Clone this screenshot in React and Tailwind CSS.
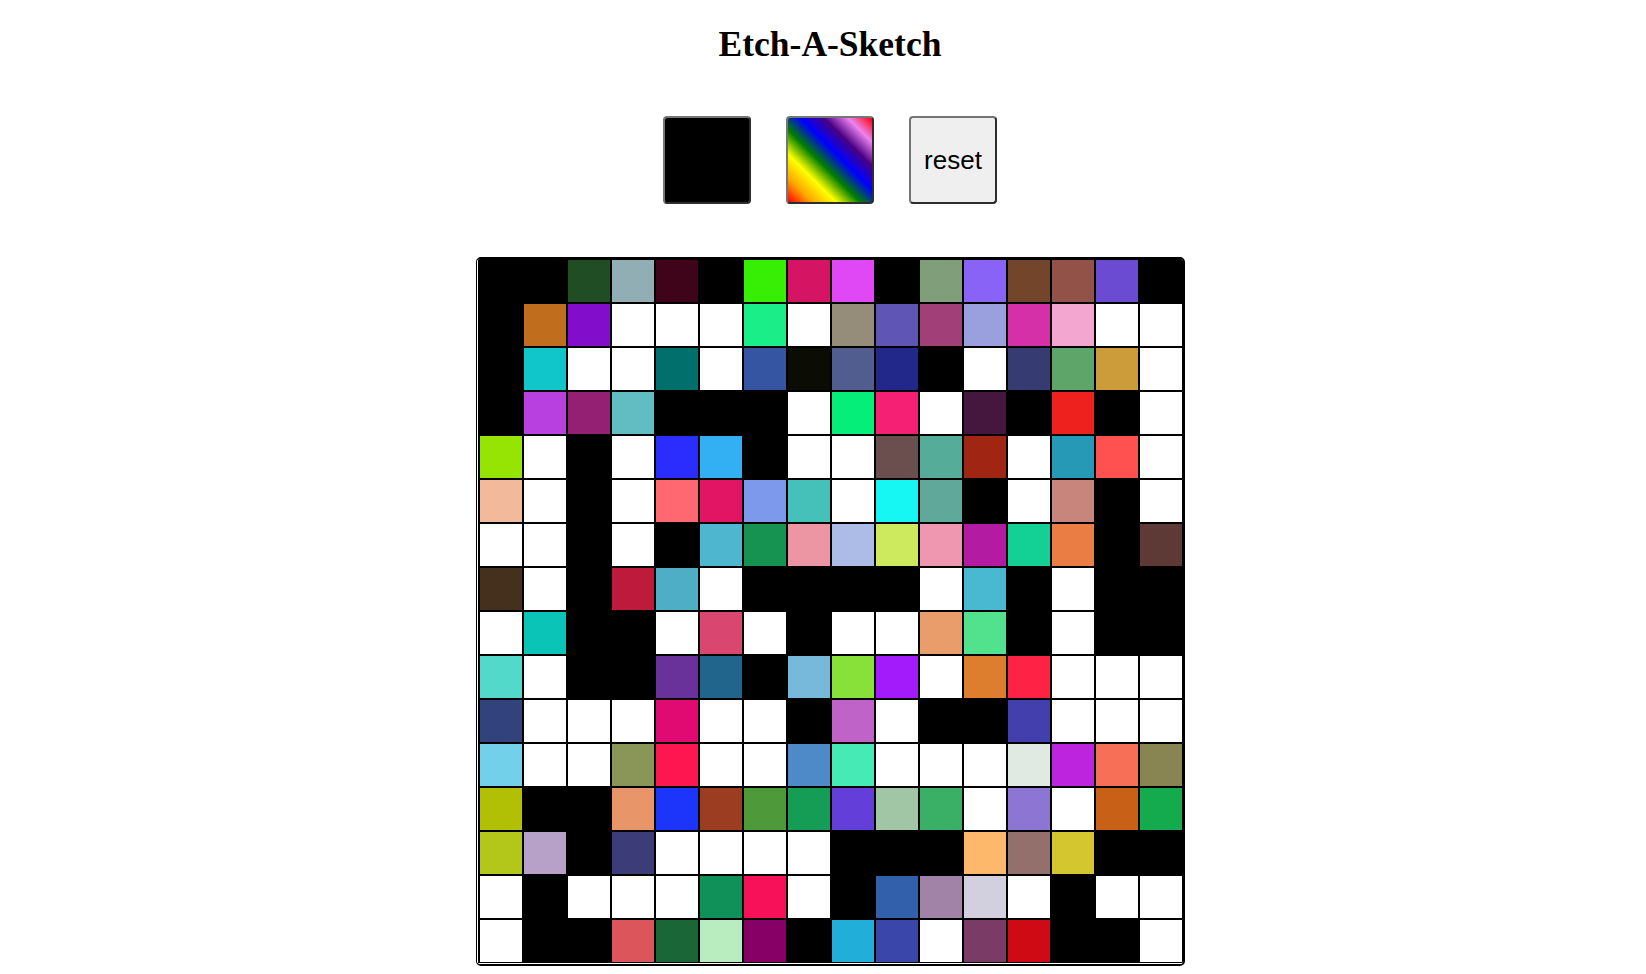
const K = '#000000'
const W = '#ffffff'

// 16 x 16 board, k = black, w = white
const BOARD = [
  'k k #214d24 #91aeb4 #3f0419 k #37ef05 #d51464 #e148f5 k #809e79 #8963f5 #73452b #935248 #6b4bd2 k',
  'k #c06e1e #820dcb w w w #1aee88 w #958c79 #5e55b4 #a03f78 #9aa0dd #d630a8 #f2a6d0 w w',
  'k #10c6ca w w #01706d w #3554a2 #0b0d05 #525d8f #22288a k w #363c71 #5ea56a #cc9c3a w',
  'k #b840e0 #942073 #62bdc2 k k k w #04ee79 #f51f74 w #45163e k #ef211f k w',
  '#96e404 w k w #2a2dfd #32b0f3 k w w #6a4f4e #55ad99 #a02513 w #2599b6 #ff514f w',
  '#f2ba9b w k w #ff6870 #e21564 #7d99ec #45c1b9 w #16f6f2 #60a899 k w #c7857b k w',
  'w w k w k #4fb6cf #179351 #eb96a2 #adbbe7 #cde95d #ef97b0 #b31ba2 #13d195 #e97d44 k #5e3a37',
  '#45301e w k #be1b3c #4eaec5 w k k k k w #49b8d1 k w k k',
  'w #0ac5b7 k k w #d94770 w k w w #e89d6b #52e28e k w k k',
  '#52d9c9 w k k #68329a #21658c k #77b9da #87e139 #a41bfb w #dc7e2e #fe2345 w w w',
  '#32427d w w w #e00a72 w w k #bf63c8 w k k #4340ad w w w',
  '#72d0ea w w #8a9558 #fd1650 w w #4e8ac7 #46eab5 w w w #e0e9e2 #bd24de #f86f58 #888552',
  '#b1c005 k k #e8956a #1d35fa #9c3d22 #4e993a #159d55 #643ed9 #a0c6a6 #39b066 w #8d75d4 w #c96017 #13ab4d',
  '#b3c71a #b8a1c8 k #3c3d78 w w w w k k k #feb86c #94706d #d3c62e k k',
  'w k w w w #0f9159 #f71158 w k #3360ab #a083a7 #d2d0df w k w w',
  'w k k #db555b #1b6637 #b9ecbe #870065 k #21afda #3b46ab w #7a3c66 #d00a15 k k w',
].map(row => row.split(' ').map(c => (c === 'k' ? K : c === 'w' ? W : c)))

function ToolButton({ className, children }) {
  return (
    <button
      className={`w-[88px] h-[88px] rounded border-2 border-t-[#767676] border-l-[#767676] border-r-[#2e2e2e] border-b-[#2e2e2e] ${className}`}
    >
      {children}
    </button>
  )
}

export default function App() {
  return (
    <div className="min-h-screen bg-white pl-[14px] flex flex-col items-center">
      <h1 className="mt-[24px] text-[35.5px] leading-[40px] font-bold text-black font-['Liberation_Serif',serif]">
        Etch-A-Sketch
      </h1>

      {/* Controls */}
      <div className="mt-[52px] flex items-center gap-[35px]">
        <ToolButton className="bg-black" />
        <ToolButton className="bg-[linear-gradient(45deg,red,orange,yellow,green,blue,indigo,violet,red)]" />
        <ToolButton className="bg-[#efefef] text-[26px] text-black font-['Liberation_Sans',Arial,sans-serif]">
          reset
        </ToolButton>
      </div>

      {/* Board */}
      <div className="mt-[53px] rounded-[5px] overflow-hidden border-t-2 border-r-2 border-b-2 border-l border-black">
        <div className="pl-px pb-px bg-white">
          <div className="grid grid-cols-[repeat(16,44px)] border-l border-black">
            {BOARD.flat().map((color, i) => (
              <div
                key={i}
                className="w-[44px] h-[44px] border border-black"
                style={{ backgroundColor: color }}
              />
            ))}
          </div>
        </div>
      </div>
    </div>
  )
}
